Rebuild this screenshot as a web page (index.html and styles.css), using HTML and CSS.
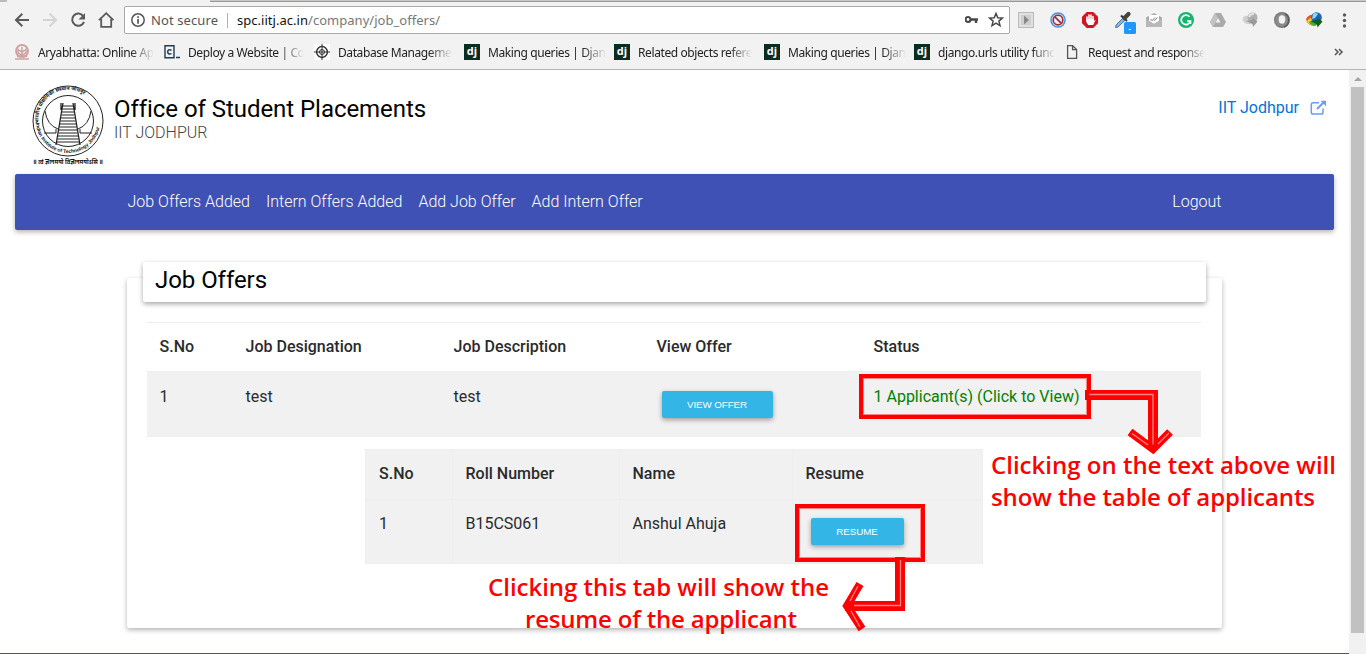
FILE: index.html
```html
<!DOCTYPE html>
<html lang="en">
<head>
<meta charset="utf-8">
<title>Job Offers</title>
<link rel="stylesheet" href="styles.css">
</head>
<body>
<div class="window">
  <header class="chrome">
    <div class="tabstrip"><span class="tab-prev"></span><span class="tab-active"></span><span class="tab-rest"></span></div>
    <div class="toolbar">
      <svg class="nav-icons" width="124" height="28" viewBox="0 0 124 28" fill="none" stroke="#5a5a5a" stroke-width="2">
        <path d="M29 14H16M22.300 7.700 16 14l6.300 6.300"/>
        <path stroke="#d4d4d4" d="M43 14h13M49.700 7.700 56 14l-6.300 6.300"/>
        <path d="M83.300 10.200A6.100 6.100 0 1 0 84 15.800"/><path fill="#5a5a5a" stroke="none" d="M85 7v6.500h-6.500z"/>
        <path stroke-width="1.800" d="M99 14.200 106.200 7.200 113.400 14.200M101.200 13v7.800h10V13"/>
      </svg>
      <div class="omnibox">
        <svg class="info" width="16" height="16" viewBox="0 0 16 16"><circle cx="8" cy="8" r="6.200" fill="none" stroke="#555" stroke-width="1.500"/><path d="M7.200 4.300h1.700v1.700H7.200zM7.200 7h1.700v4.800H7.200z" fill="#555"/></svg>
        <span class="secure">Not secure</span><span class="divider"></span>
        <span class="url"><b>spc.iitj.ac.in</b>/company/job_offers/</span>
        <svg class="box-icons" width="44" height="18" viewBox="0 0 44 18"><g fill="none" stroke="#484848"><circle cx="3" cy="8.500" r="2.500" stroke-width="2.200"/><path stroke-width="2.400" d="M5.500 8.500h7.500M11 8v4"/><path stroke-width="1.500" d="m31 2.500 1.800 4.200 4.600.4-3.500 3 1.100 4.500-4-2.400-4 2.400 1.100-4.500-3.500-3 4.600-.4z"/></g></svg>
      </div>
      <svg class="extensions" width="342" height="30" viewBox="1015 5 342 30">
        <rect x="1018.500" y="12.500" width="15" height="15" fill="#e0e0e0" stroke="#bbb"/><rect x="1021" y="15" width="10" height="10" fill="#cfcfcf"/><path d="m1024 15.500 5 4.500-5 4.500z" fill="#888"/>
        <circle cx="1058" cy="20" r="7.800" fill="#4493e0"/><circle cx="1058" cy="20" r="6.300" fill="#e8f0fa"/><circle cx="1058" cy="20" r="4.800" fill="none" stroke="#a03038" stroke-width="1.700"/><path d="m1054.600 16.600 6.800 6.800" stroke="#a03038" stroke-width="1.700"/>
        <path d="M1086.800 12h6.400l4.800 4.800v6.400l-4.800 4.800h-6.400l-4.800-4.800v-6.400z" fill="#d41420"/><path d="M1087 20.300v-3.300M1089 20v-5M1091 20v-5M1093 20.500v-4" stroke="#fff" stroke-width="1.600" stroke-linecap="round"/><path d="M1086.200 19h7.600v2l2-1.500-2.600 5.500h-5l-2-3z" fill="#fff"/>
        <path d="m1115.500 27.500.6-2.500 7-7 2 2-7 7z" fill="#8ab8e4" stroke="#4d7396"/><path d="m1121 15.500 6 5.500" stroke="#333" stroke-width="2"/><path d="m1124.500 18 4-4" stroke="#444" stroke-width="4.300" stroke-linecap="round"/>
        <rect x="1124" y="22" width="12" height="12" rx="1.500" fill="#2196ff"/><path d="M1128.800 29.500h2" stroke="#fff"/>
        <path d="m1146 17.500 8-4.500 8 4.500v9h-16z" fill="#aaa"/><path d="M1149 15h10v6l-5 3-5-3z" fill="#fff"/><path d="m1146 19 8 5 8-5v8h-16z" fill="#b8b8b8"/><path d="m1150.500 19 1.600 1.700 3-3.200m-1.100 2.700.5.500 3-3.200" fill="none" stroke="#777"/>
        <circle cx="1186" cy="20" r="8" fill="#18b46f"/><path d="M1189.500 16.800a4.700 4.700 0 1 0 1 4.200h-3.500M1190.500 20.500v3.500" fill="none" stroke="#fff" stroke-width="1.700"/>
        <path d="M1215 13h6l5 9-3 5h-10l-3-5z" fill="#aaa"/><path d="m1218 18 2.500 4.500h-5z" fill="#f2f2f2"/><path d="m1215 13 3 5-5 9-3-5z" fill="#c2c2c2"/>
        <ellipse cx="1248" cy="20" rx="5.500" ry="4" transform="rotate(20 1248 20)" fill="#cfcfcf"/><circle cx="1252.500" cy="17.500" r="5" fill="#b0b0b0"/><path d="M1249 17q2-4 5-3" stroke="#e6e6e6" stroke-width="2" fill="none"/><path d="m1246 21 6-1 .5-2 5 3.500-4.500 5.500-.5-3z" fill="#999"/>
        <circle cx="1282" cy="20" r="8" fill="#777"/><circle cx="1282" cy="20" r="6.800" fill="#8c8c8c"/><ellipse cx="1282" cy="19.500" rx="3.300" ry="4.200" fill="#f2f2f2"/><path d="M1284 27c6-2 6-11 1-13" stroke="#5c5c5c" stroke-width="1.500" fill="none"/>
        <path d="M1306 19q3-5 8-4l6 7-5 4q-8 0-9-7" fill="#e25b24"/><path d="M1307 21q3-4 7-3l3 5-4 2q-5 0-6-4" fill="#f2d724"/><path d="M1309 22q3-3 7-1l1 4q-6 1-8-3" fill="#3faa3c"/><circle cx="1316.500" cy="17.500" r="5.300" fill="#1d63bb"/><path d="M1313 14q3-2 5 0l-3 4-3 1z" fill="#92d6e8"/><path d="m1311 21 6-1 .5-2 5 3.500-5 6-.5-3z" fill="#145c20"/>
        <g fill="#5a5a5a"><circle cx="1344.500" cy="15" r="1.700"/><circle cx="1344.500" cy="20.500" r="1.700"/><circle cx="1344.500" cy="26" r="1.700"/></g>
      </svg>
    </div>
    <nav class="bookmarks">
      <a class="bookmark"><svg width="16" height="16" viewBox="0 0 16 16" fill="none" stroke="#cda1a1"><circle cx="8" cy="7" r="6" stroke-width="1.800"/><path d="M4 4.500v4l4 3 4-3v-4M8 3v9M5 6l3 2 3-2M3 12.500h10M1 15h14" stroke-width="1.500"/></svg><span>Aryabhatta: Online Ap</span></a>
      <a class="bookmark"><svg width="16" height="16" viewBox="0 0 16 16" fill="none" stroke="#1d3c55"><path d="M1 1.800h9v12H1z" stroke-width="1.400"/><path d="M7.500 6.200q-3.800-1.500-3.800 1.600T7.500 9.600M12 13.500h4" stroke-width="1.500"/></svg><span>Deploy a Website | Co</span></a>
      <a class="bookmark"><svg width="16" height="16" viewBox="0 0 16 16" fill="none" stroke="#333"><path fill="#fff" stroke="none" d="M0 0h16v16H0z"/><circle cx="8" cy="8" r="5.400" stroke-width="1.500"/><circle cx="8" cy="8" r="2.500"/><path d="M8 0v16M0 8h16"/></svg><span>Database Manageme</span></a>
      <a class="bookmark"><i class="dj">dj</i><span>Making queries | Djan</span></a>
      <a class="bookmark"><i class="dj">dj</i><span>Related objects refere</span></a>
      <a class="bookmark"><i class="dj">dj</i><span>Making queries | Djan</span></a>
      <a class="bookmark"><i class="dj">dj</i><span>django.urls utility func</span></a>
      <a class="bookmark"><svg width="16" height="16" viewBox="0 0 16 16" fill="none" stroke="#555" stroke-width="1.300"><path d="M3.600 1.600h5l4 4v8.800h-9zM8.600 1.600v4h4"/></svg><span>Request and response</span></a>
      <svg class="more" width="10" height="10" viewBox="0 0 10 10" fill="none" stroke="#555" stroke-width="1.500"><path d="m1 2 3 3-3 3M5 2l3 3-3 3"/></svg>
    </nav>
  </header>

  <div class="viewport">
    <main class="page">
      <div class="brand">
        <svg class="logo" width="74" height="84" viewBox="-1 0 74 84">
          <defs><path id="top" d="M8.500 46A29.500 29.500 0 1 1 63.500 46"/><path id="bottom" d="M4 37A32 32 0 0 0 68 37"/></defs>
          <g fill="none" stroke="#222"><circle cx="36" cy="37" r="35"/><circle cx="36" cy="37" r="25.500"/><path d="M13 27q2 14 13 18M59 27q-2 14-13 18M12 49h12v-4M60 49H48v-4"/><path stroke-width="1.300" d="M31 19l-7 42M41 19l7 42M29 19v7M43 19v7"/><path stroke-width="1.200" d="M30.500 22h11M30 25h12M30 28h12M29.500 31h13M29 34h14M28.500 37h15M28 40h16M27.500 43h17M27 46h18M26.500 49h19M26 52h20M25.500 55h21M25 58h22"/></g>
          <g class="seal"><text><textPath href="#top" startOffset="7">भारतीय प्रौद्योगिकी संस्थान जोधपुर</textPath></text><text class="english"><textPath href="#bottom" startOffset="2">Indian Institute of Technology Jodhpur</textPath></text><text x="1" y="80" textLength="70" lengthAdjust="spacingAndGlyphs" class="motto">॥ त्वं ज्ञानमयो विज्ञानमयोऽसि ॥</text></g>
        </svg>
        <div class="brand-text"><h1>Office of Student Placements</h1><p>IIT JODHPUR</p></div>
        <a class="external">IIT Jodhpur
          <svg width="17" height="16" viewBox="0 0 17 16" fill="none" stroke="#6b9cf0"><path stroke-width="1.500" d="M9 2.700H3Q1.300 2.700 1.300 4.500v7.700Q1.300 14 3 14h8.200q1.800 0 1.800-1.800V8.500"/><path stroke-width="2" d="m7 9 7-7"/><path d="M10.500.7H16v5.500z" fill="#6b9cf0" stroke="none"/></svg>
        </a>
      </div>
      <nav class="navbar"><a>Job Offers Added</a><a>Intern Offers Added</a><a>Add Job Offer</a><a>Add Intern Offer</a><a class="logout">Logout</a></nav>
      <section class="card">
        <h2 class="card-title">Job Offers</h2>
        <div class="offers">
          <div class="offer-row head"><span>S.No</span><span>Job Designation</span><span>Job Description</span><span>View Offer</span><span>Status</span></div>
          <div class="offer-row entry"><span>1</span><span>test</span><span>test</span><span><button class="btn">VIEW OFFER</button></span><span class="status">1 Applicant(s) (Click to View)</span></div>
        </div>
        <div class="applicants">
          <div class="applicant-row head"><span>S.No</span><span>Roll Number</span><span>Name</span><span>Resume</span></div>
          <div class="applicant-row entry"><span>1</span><span>B15CS061</span><span>Anshul Ahuja</span><span><button class="btn resume">RESUME</button></span></div>
        </div>
      </section>
      <div class="footer-edge"></div>
    </main>
    <aside class="scrollbar"><i class="up"></i><i class="thumb"></i></aside>
  </div>

  <svg class="notes" width="1366" height="654" viewBox="0 0 1366 654">
    <g fill="none" stroke="#f00">
      <path stroke-width="4" d="M861 376h228v41H861zM797 506h126v54H797z"/>
      <path stroke="#ff8585" d="M863.500 378.500h223v36h-223zM799.500 508.500h121v49h-121z"/>
      <path stroke-width="10" d="M1085 395h68v55M900 557v49h-55"/>
      <path stroke-width="8" d="m1130 432 23 17 17-17M860 584l-13 22 15 23"/>
      <path stroke="#ff8585" stroke-width="1.300" d="M1089 394.500h64v50M900.500 560v45.500H854M1132 433.500l16 11.500M1169 433l-11 11M858 586l-8 15M851 611l9 16"/>
    </g>
    <g class="note">
      <text x="991" y="474" textLength="345">Clicking on the text above will</text>
      <text x="991" y="506" textLength="324">show the table of applicants</text>
      <text x="488" y="596" textLength="341">Clicking this tab will show the</text>
      <text x="525" y="628" textLength="272">resume of the applicant</text>
    </g>
  </svg>
</div>
</body>
</html>
```
FILE: styles.css
```css
* { box-sizing: border-box; }
body { margin: 0; background: #fff; font-family: Roboto, "Liberation Sans", sans-serif; color: #292b2c; }
.window { position: relative; width: 1366px; height: 654px; overflow: hidden; display: flex; flex-direction: column; }
.chrome { height: 70px; background: #f2f2f2; border-bottom: 1px solid #b5b3b5; font-family: "Noto Sans", "Open Sans", sans-serif; }
.tabstrip { display: flex; height: 2px; }
.tab-prev { width: 7px; background: #bbb; }
.tab-active { width: 203px; }
.tab-rest { flex: 1; background: #c8c8c8; border-bottom: 1px solid #999; }
.toolbar { display: flex; height: 36px; padding-top: 4px; }
.nav-icons { flex: none; }
.omnibox { width: 886px; height: 28px; margin-right: 5px; border: 1px solid #a9a9a9; border-radius: 2px; background: #fff; display: flex; align-items: center; padding-left: 5px; }
.secure { margin-left: 5px; width: 67px; font-size: 13px; color: #555; letter-spacing: .1px; white-space: nowrap; }
.divider { width: 1px; height: 15px; margin: 0 9px; background: #b3b3b3; }
.url { font-size: 13px; color: #777; letter-spacing: .03px; }
.url b { font-weight: 400; color: #111; }
.box-icons { margin-left: auto; }
.extensions { margin-top: -1px; flex: none; }
.bookmarks { display: flex; height: 28px; padding-left: 14px; align-items: center; }
.bookmark { display: flex; width: 150px; padding-right: 12px; gap: 8px; align-items: center; font-size: 12px; color: #222; }
.bookmark svg, .dj { flex: none; width: 16px; height: 16px; }
.bookmark span { flex: 1; white-space: nowrap; letter-spacing: -.4px; -webkit-mask-image: linear-gradient(to right, #000 80%, transparent 100%); mask-image: linear-gradient(to right, #000 80%, transparent 100%); }
.dj { background: #092e20; color: #fff; font: 700 11px/14px "Open Sans", sans-serif; text-align: center; }
.more { margin-left: auto; margin-right: 22px; }
.viewport { display: flex; height: 584px; }
.page { width: 1349px; display: flex; flex-direction: column; padding: 0 15px; }
.brand { display: flex; height: 104px; padding: 14px 7px 0 16px; flex: none; }
.logo { flex: none; }
.seal { font: 700 5px "Liberation Sans", "Noto Sans", sans-serif; fill: #111; }
.english { font-size: 5px; }
.motto { font-size: 7px; }
.brand-text { padding: 11px 0 0 9px; }
h1 { margin: 0; font-size: 24px; line-height: 28px; font-weight: 400; color: #000; letter-spacing: -.05px; }
.brand-text p { margin: 0; font-size: 16px; line-height: 20px; font-weight: 300; color: #444; }
.external { margin-left: auto; padding-top: 7px; height: 40px; display: flex; gap: 11px; align-items: center; color: #0275d8; font-size: 16px; }
.navbar { width: 1319px; height: 56px; flex: none; background: #3f51b5; border-radius: 2px; display: flex; align-items: center; padding: 0 112.500px 2px; gap: 16px; color: #fff; font-weight: 300; font-size: 16px; box-shadow: 0 2px 5px rgba(0,0,0,.3); }
.logout { margin-left: auto; }
.card { width: 1095px; height: 350px; flex: none; margin: 48px 0 0 112px; padding: 0 21px 0 20px; border-radius: 2px; box-shadow: 0 2px 5px rgba(0,0,0,.3); background: #fff; }
.card-title { width: 1063px; height: 40px; margin: -16px 0 20px -4px; padding: 3px 12px; background: #fff; border-radius: 2px; box-shadow: 0 2px 5px rgba(0,0,0,.35); font-size: 24px; line-height: 30px; font-weight: 400; color: #000; letter-spacing: -.05px; }
.offers { border-top: 1px solid #eceeef; font-size: 16px; }
.offer-row { display: grid; grid-template-columns: 86px 208px 203px 217px 1fr; padding: 12px 0 0 12.500px; line-height: 24px; }
.head { height: 49px; font-weight: 500; }
.offers .head { height: 48px; }
.entry { height: 66px; }
.offer-row.entry { padding-top: 13px; background: #f1f1f1; border-top: 1px solid #eceeef; border-bottom: 1px solid #eceeef; }
.status { color: #008000; }
.btn { display: block; width: 111px; height: 27px; margin: 6px 0 0 5px; padding: 0; border: 0; border-radius: 2px; background: #33b5e5; color: #fff; font: 9.800px "Liberation Sans", sans-serif; letter-spacing: -.1px; box-shadow: 0 2px 5px rgba(0,0,0,.35); }
.resume { width: 93px; }
.applicants { width: 618px; margin: 12px 0 0 218px; background: #f1f1f1; border: 1px solid #eceeef; font-size: 16px; }
.applicant-row { display: grid; grid-template-columns: 86px 167px 173px 1fr; line-height: 24px; }
.applicant-row > span { padding: 12px 0 0 12.500px; border-left: 1px solid #eceeef; }
.applicant-row > span:first-child { border-left: 0; padding-left: 13px; }
.applicant-row.entry { height: 64px; border-top: 1px solid #eceeef; }
.footer-edge { width: 1349px; height: 1px; margin: auto 0 0 -15px; background: #3f51b5; }
.scrollbar { width: 17px; background: #f1f1f1; display: flex; flex-direction: column; align-items: center; }
.up { width: 0; height: 0; border: 4px solid transparent; border-top: 0; border-bottom-color: #a3a3a3; margin: 7px 0 6px; }
.thumb { width: 13px; height: 546px; background: #c1c1c1; }
.notes { position: absolute; inset: 0; pointer-events: none; }
.note { font: 600 24px "Open Sans", "Noto Sans", sans-serif; fill: #f00; }
```
